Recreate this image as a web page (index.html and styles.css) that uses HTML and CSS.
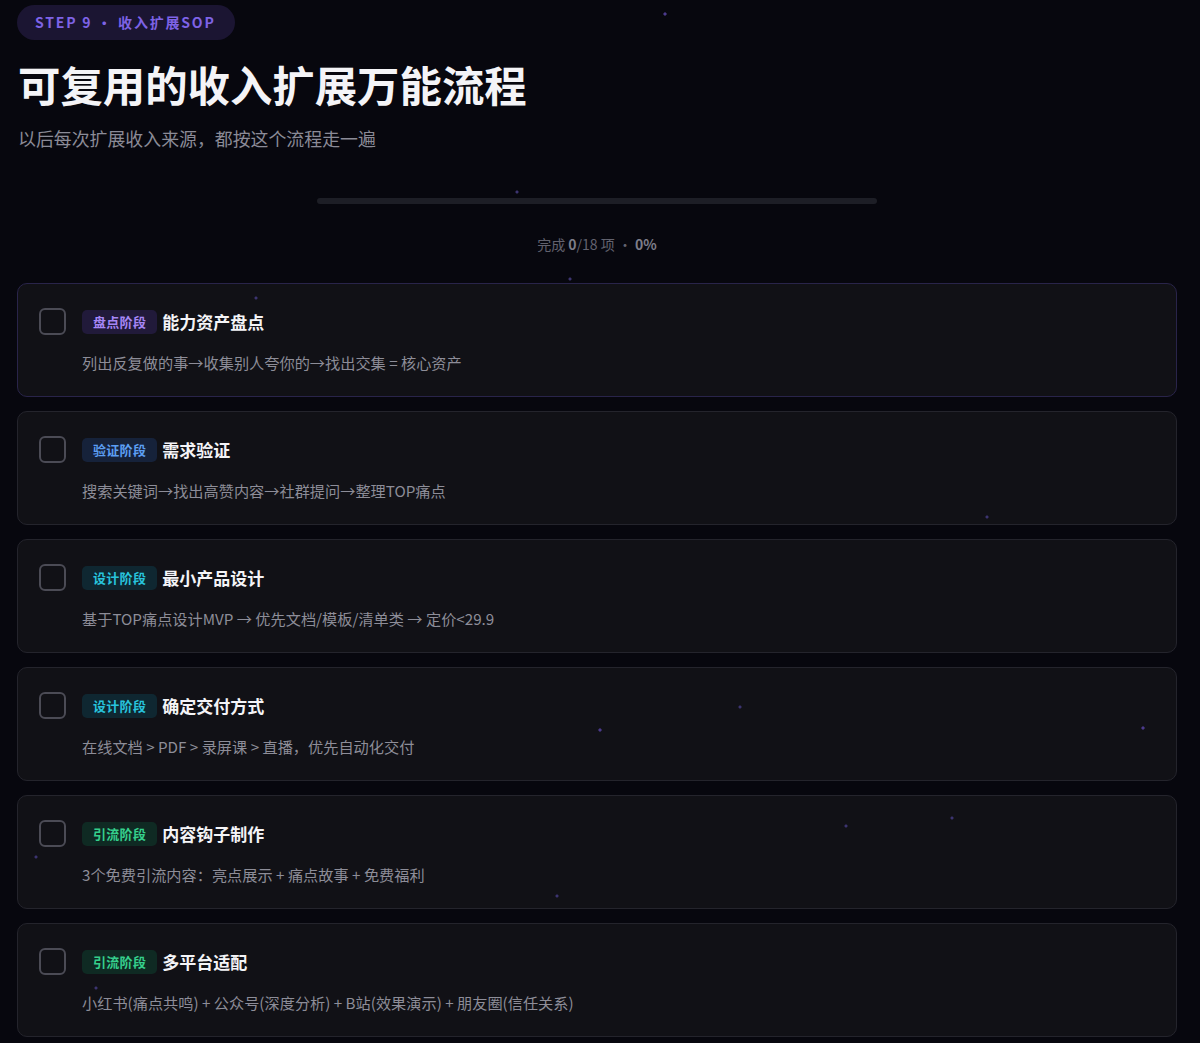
FILE: index.html
```html
<!DOCTYPE html>
<html lang="zh-CN">
<head>
    <meta charset="UTF-8">
    <meta name="viewport" content="width=device-width, initial-scale=1.0">
    <title>收入扩展SOP</title>
    <link rel="stylesheet" href="styles.css">
</head>
<body>
    <div class="stars"></div>
    <main class="page">
        <header class="hero">
            <span class="step-badge">STEP 9 · 收入扩展SOP</span>
            <h1>可复用的收入扩展万能流程</h1>
            <p class="subtitle">以后每次扩展收入来源，都按这个流程走一遍</p>
        </header>

        <section class="progress">
            <div class="progress-track"><div class="progress-fill" style="width: 0%"></div></div>
            <p class="progress-text">完成 <b>0</b>/18 项 · <b>0%</b></p>
        </section>

        <ul class="task-list">
            <li class="task active">
                <span class="checkbox"></span>
                <div class="task-body">
                    <div class="task-head">
                        <span class="tag tag-audit">盘点阶段</span>
                        <h3>能力资产盘点</h3>
                    </div>
                    <p>列出反复做的事→收集别人夸你的→找出交集 = 核心资产</p>
                </div>
            </li>
            <li class="task">
                <span class="checkbox"></span>
                <div class="task-body">
                    <div class="task-head">
                        <span class="tag tag-verify">验证阶段</span>
                        <h3>需求验证</h3>
                    </div>
                    <p>搜索关键词→找出高赞内容→社群提问→整理TOP痛点</p>
                </div>
            </li>
            <li class="task">
                <span class="checkbox"></span>
                <div class="task-body">
                    <div class="task-head">
                        <span class="tag tag-design">设计阶段</span>
                        <h3>最小产品设计</h3>
                    </div>
                    <p>基于TOP痛点设计MVP → 优先文档/模板/清单类 → 定价&lt;29.9</p>
                </div>
            </li>
            <li class="task">
                <span class="checkbox"></span>
                <div class="task-body">
                    <div class="task-head">
                        <span class="tag tag-design">设计阶段</span>
                        <h3>确定交付方式</h3>
                    </div>
                    <p>在线文档 &gt; PDF &gt; 录屏课 &gt; 直播，优先自动化交付</p>
                </div>
            </li>
            <li class="task">
                <span class="checkbox"></span>
                <div class="task-body">
                    <div class="task-head">
                        <span class="tag tag-traffic">引流阶段</span>
                        <h3>内容钩子制作</h3>
                    </div>
                    <p>3个免费引流内容：亮点展示 + 痛点故事 + 免费福利</p>
                </div>
            </li>
            <li class="task">
                <span class="checkbox"></span>
                <div class="task-body">
                    <div class="task-head">
                        <span class="tag tag-traffic">引流阶段</span>
                        <h3>多平台适配</h3>
                    </div>
                    <p>小红书(痛点共鸣) + 公众号(深度分析) + B站(效果演示) + 朋友圈(信任关系)</p>
                </div>
            </li>
        </ul>
    </main>
</body>
</html>
```

FILE: styles.css
```css
body {
    font-family: "Noto Sans CJK SC", "Noto Sans", sans-serif;
    background-color: #07070e;
    color: #f2f2f5;
    margin: 0;
    overflow: hidden;
    min-height: 100vh;
}

/* faint twinkles sprinkled over the page */
.stars {
    position: fixed;
    inset: 0;
    pointer-events: none;
    z-index: 2;
    background:
        radial-gradient(circle at 665px 14px, #4b3a8c 1.2px, transparent 2px),
        radial-gradient(circle at 256px 298px, #3c3470 1px, transparent 2px),
        radial-gradient(circle at 517px 192px, #3c3470 1px, transparent 2px),
        radial-gradient(circle at 570px 279px, #3c3470 1px, transparent 2px),
        radial-gradient(circle at 987px 517px, #3c3470 1px, transparent 2px),
        radial-gradient(circle at 600px 730px, #4b3a8c 1.2px, transparent 2px),
        radial-gradient(circle at 740px 707px, #3c3470 1px, transparent 2px),
        radial-gradient(circle at 1143px 728px, #4b3a8c 1.2px, transparent 2px),
        radial-gradient(circle at 846px 826px, #3c3470 1px, transparent 2px),
        radial-gradient(circle at 952px 818px, #3c3470 1px, transparent 2px),
        radial-gradient(circle at 557px 896px, #3c3470 1px, transparent 2px),
        radial-gradient(circle at 36px 857px, #3c3470 1px, transparent 2px),
        radial-gradient(circle at 96px 988px, #3c3470 1px, transparent 2px);
}

.page {
    width: 1160px;
    margin-left: 17px;
    padding-top: 5px;
}

.step-badge {
    display: inline-block;
    height: 35px;
    line-height: 35px;
    padding: 0 19px 0 18px;
    border-radius: 18px;
    background-color: #1b1532;
    color: #7e63e6;
    font-size: 14px;
    font-weight: 700;
    letter-spacing: 1.8px;
}

h1 {
    margin: 16px 0 0 1px;
    font-size: 42.4px;
    line-height: 56px;
    font-weight: 700;
    color: #f4f4f7;
}

.subtitle {
    margin: 13px 0 0 1px;
    font-size: 17.9px;
    line-height: 26px;
    color: #8b8b97;
}

.progress {
    display: flex;
    flex-direction: column;
    align-items: center;
    margin-top: 47px;
}

.progress-track {
    width: 560px;
    height: 6px;
    border-radius: 3px;
    background-color: #1d1e26;
    overflow: hidden;
}

.progress-fill {
    height: 100%;
    background-color: #7e63e6;
}

.progress-text {
    margin: 30px 0 0;
    font-size: 14px;
    line-height: 20px;
    color: #62626e;
}

.progress-text b {
    color: #7d7d89;
}

.task-list {
    list-style: none;
    margin: 29px 0 0;
    padding: 0;
    display: flex;
    flex-direction: column;
    gap: 14px;
}

.task {
    display: flex;
    gap: 16px;
    padding: 24px 21px 21px;
    height: 114px;
    box-sizing: border-box;
    border: 1px solid #24242c;
    border-radius: 10px;
    background-color: #111116;
}

.task.active {
    border-color: #29244a;
}

.checkbox {
    flex: none;
    width: 27px;
    height: 27px;
    box-sizing: border-box;
    border: 2px solid #4b4b55;
    border-radius: 6px;
}

.task-head {
    display: flex;
    align-items: center;
    gap: 5px;
    height: 27px;
}

.tag {
    display: inline-block;
    height: 24px;
    line-height: 24px;
    padding: 0 11px;
    border-radius: 5px;
    font-size: 13px;
    font-weight: 700;
    letter-spacing: 0.3px;
}

.tag-audit {
    background-color: #211a3a;
    color: #a586f5;
}

.tag-verify {
    background-color: #16223a;
    color: #5c9ef2;
}

.tag-design {
    background-color: #0f2731;
    color: #28c3dc;
}

.tag-traffic {
    background-color: #0f2a23;
    color: #35cf8c;
}

.task-head h3 {
    margin: 0;
    font-size: 17px;
    font-weight: 700;
    color: #f4f4f7;
}

.task-body p {
    margin: 16px 0 0;
    font-size: 15.2px;
    line-height: 22px;
    color: #8d8d98;
}
```
